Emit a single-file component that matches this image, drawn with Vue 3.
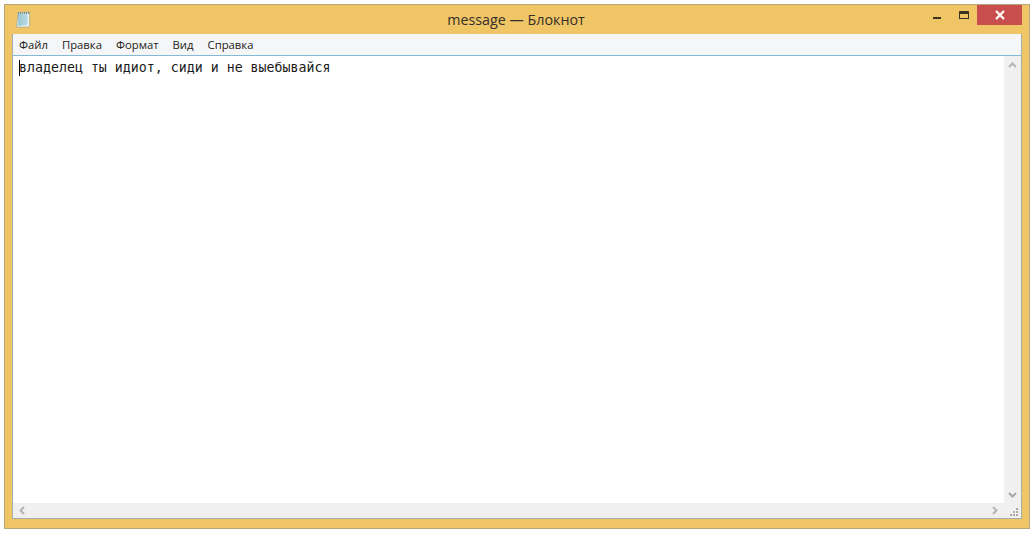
<script setup>
const menus = ['Файл', 'Правка', 'Формат', 'Вид', 'Справка']
</script>

<template>
  <div class="page">
    <div class="window">
      <header class="titlebar">
        <svg class="app-icon" width="18" height="18" viewBox="0 0 18 18">
          <defs>
            <linearGradient id="pad" x1="0" y1="0" x2="1" y2="0">
              <stop offset="0" stop-color="#8fc0cf" />
              <stop offset="1" stop-color="#c3e2e8" />
            </linearGradient>
          </defs>
          <path d="M4 2.5 L15.5 2 L15.5 15.5 Q15.5 17 14 17 L2 17 Q3 15 3 12 Z" fill="#f6f7f1" />
          <path d="M4 3.5 L13.8 3.2 L13.8 14.5 Q13.8 15.6 12.5 15.6 L3.2 15.8 Q4 14 4 12 Z" fill="url(#pad)" />
          <path d="M4.5 6.5H13.5M4.5 8.5H13.5M4.5 10.5H13.5M4.2 12.5H13.5" stroke="#a9cfd9" stroke-width=".7" />
          <path d="M4 3H15" stroke="#59666a" stroke-width="1.6" stroke-dasharray="1 1" />
          <path d="M4 2.5 L15.5 2 L15.5 15.5 Q15.5 17 14 17 L2 17 Q3 15 3 12 Z" fill="none" stroke="#8f9a8e" stroke-width=".6" />
        </svg>
        <div class="title">message — Блокнот</div>
        <div class="controls">
          <div class="ctl min"><span class="min-bar"></span></div>
          <div class="ctl max"><span class="max-box"></span></div>
          <div class="close">
            <svg width="10" height="10" viewBox="0 0 10 10">
              <path d="M1 1L9 9M9 1L1 9" stroke="#fff" stroke-width="2.2" />
            </svg>
          </div>
        </div>
      </header>
      <div class="client">
        <nav class="menubar">
          <span v-for="m in menus" :key="m" class="menu-item">{{ m }}</span>
        </nav>
        <div class="editor">
          <div class="content">
            <div class="text"><span class="caret"></span>владелец ты идиот, сиди и не выебывайся</div>
            <div class="vscroll">
              <svg width="9" height="6" viewBox="0 0 9 6"><path d="M1 5L4.5 1.5L8 5" fill="none" stroke="#b5b5b5" stroke-width="2" /></svg>
              <svg width="9" height="6" viewBox="0 0 9 6"><path d="M1 1L4.5 4.5L8 1" fill="none" stroke="#a8a8a8" stroke-width="2" /></svg>
            </div>
          </div>
          <div class="hbar">
            <div class="hscroll">
              <svg width="6" height="9" viewBox="0 0 6 9"><path d="M5 1L1.5 4.5L5 8" fill="none" stroke="#b5b5b5" stroke-width="2" /></svg>
              <svg width="6" height="9" viewBox="0 0 6 9"><path d="M1 1L4.5 4.5L1 8" fill="none" stroke="#b5b5b5" stroke-width="2" /></svg>
            </div>
            <div class="grip">
              <svg width="10" height="10" viewBox="0 0 10 10">
                <path d="M7 1h2v2H7zM4 4h2v2H4zM7 4h2v2H7zM1 7h2v2H1zM4 7h2v2H4zM7 7h2v2H7z" fill="#a9a9a9" />
              </svg>
            </div>
          </div>
        </div>
      </div>
    </div>
  </div>
</template>

<style>
html, body { margin: 0; background: #fff; }
</style>

<style scoped>
.page {
  width: 1034px;
  height: 533px;
  box-sizing: border-box;
  padding: 4px;
  background: #fff;
  overflow: hidden;
}
.window {
  height: 100%;
  box-sizing: border-box;
  display: flex;
  flex-direction: column;
  background: #f0c566;
  border: 1px solid #b5a77c;
  padding: 0 7px 9px 7px;
}
.titlebar {
  height: 29px;
  flex: none;
  position: relative;
  display: flex;
  align-items: center;
  justify-content: center;
}
.app-icon {
  position: absolute;
  left: 2px;
  top: 5px;
}
.title {
  font: 14.3px "Open Sans", "Noto Sans", sans-serif;
  color: #33302a;
  margin-right: 2px;
}
.controls {
  position: absolute;
  right: 0;
  top: 0;
  display: flex;
}
.ctl {
  width: 27px;
  height: 20px;
  position: relative;
}
.min-bar {
  position: absolute;
  left: 10px;
  top: 12px;
  width: 8px;
  height: 2px;
  background: #3a3320;
}
.max-box {
  position: absolute;
  left: 9px;
  top: 6px;
  width: 8px;
  height: 4px;
  border: 1px solid #3a3320;
  border-top-width: 3px;
}
.close {
  width: 45px;
  height: 20px;
  background: #c94f4f;
  display: flex;
  align-items: center;
  justify-content: center;
}
.client {
  flex: 1;
  min-height: 0;
  display: flex;
  flex-direction: column;
  border: 1px solid #9fb0ad;
  border-top: 0;
  background: #fff;
}
.menubar {
  height: 21px;
  flex: none;
  background: #f5f6f7;
  display: flex;
  align-items: center;
  padding-left: 6px;
  gap: 14px;
  font: 11.3px "Open Sans", "Noto Sans", sans-serif;
  color: #222;
}
.editor {
  flex: 1;
  min-height: 0;
  display: flex;
  flex-direction: column;
  border-top: 1px solid #86b9d6;
}
.content {
  flex: 1;
  min-height: 0;
  display: flex;
}
.text {
  flex: 1;
  padding: 4px 0 0 6px;
  font: 13.28px/16px "DejaVu Sans Mono", monospace;
  color: #1a1a1a;
  position: relative;
  white-space: pre;
}
.caret {
  position: absolute;
  left: 6px;
  top: 4px;
  width: 1px;
  height: 16px;
  background: #000;
}
.vscroll {
  width: 17px;
  flex: none;
  background: #f0f0f0;
  display: flex;
  flex-direction: column;
  align-items: center;
  justify-content: space-between;
  padding: 6px 0 5px;
  box-sizing: border-box;
}
.hbar {
  height: 15px;
  flex: none;
  display: flex;
}
.hscroll {
  flex: 1;
  background: #f0f0f0;
  display: flex;
  align-items: center;
  justify-content: space-between;
  padding: 0 6px;
}
.grip {
  width: 17px;
  flex: none;
  background: #f0f0f0;
  display: flex;
  align-items: flex-end;
  justify-content: flex-end;
  padding: 0 2px 1px 0;
  box-sizing: border-box;
}
</style>
